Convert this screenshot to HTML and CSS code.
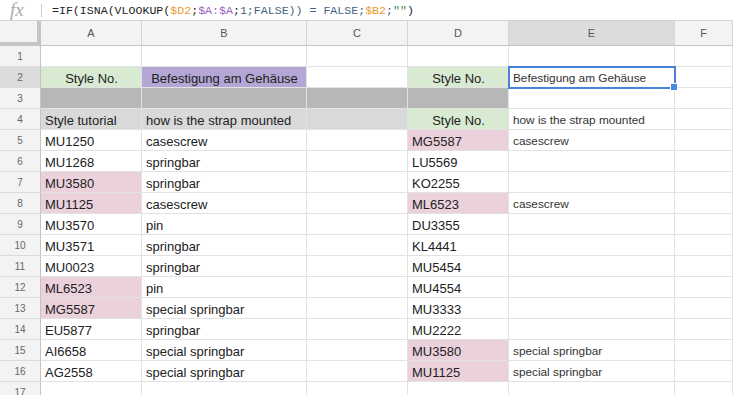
FILE: index.html
```html
<!DOCTYPE html>
<html lang="de">
<head>
  <meta charset="UTF-8" />
  <title>Sheet</title>
  <link rel="stylesheet" href="styles.css">
</head>
<body>
  <div class="formula">
    <span class="fx">fx</span>
    <span class="sep"></span>
    <span class="code">=IF(ISNA(VLOOKUP(<span class="ref1">$D2</span>;<span class="ref2">$A:$A</span>;<span class="lit">1;FALSE)) = FALSE;</span><span class="ref1">$B2</span><span class="lit">;</span><span class="str">""</span>)</span>
  </div>

  <div class="sheet">
    <div class="row head">
      <div class="corner"></div>
      <div class="col">A</div>
      <div class="col">B</div>
      <div class="col">C</div>
      <div class="col">D</div>
      <div class="col sel">E</div>
      <div class="col">F</div>
    </div>

    <div class="row">
      <div class="num">1</div>
      <div class="c"></div><div class="c"></div><div class="c"></div><div class="c"></div><div class="c"></div><div class="c"></div>
    </div>

    <div class="row">
      <div class="num sel">2</div>
      <div class="c green mid">Style No.</div>
      <div class="c purple mid">Befestigung am Gehäuse</div>
      <div class="c"></div>
      <div class="c green mid">Style No.</div>
      <div class="c small active">Befestigung am Gehäuse</div>
      <div class="c"></div>
    </div>

    <div class="row">
      <div class="num">3</div>
      <div class="c grey"></div><div class="c grey"></div><div class="c grey"></div><div class="c grey"></div>
      <div class="c"></div><div class="c"></div>
    </div>

    <div class="row">
      <div class="num">4</div>
      <div class="c light">Style tutorial</div>
      <div class="c light">how is the strap mounted</div>
      <div class="c light"></div>
      <div class="c green mid">Style No.</div>
      <div class="c small">how is the strap mounted</div>
      <div class="c"></div>
    </div>

    <div class="row">
      <div class="num">5</div>
      <div class="c">MU1250</div><div class="c">casescrew</div><div class="c"></div>
      <div class="c pink">MG5587</div><div class="c small">casescrew</div><div class="c"></div>
    </div>

    <div class="row">
      <div class="num">6</div>
      <div class="c">MU1268</div><div class="c">springbar</div><div class="c"></div>
      <div class="c">LU5569</div><div class="c small"></div><div class="c"></div>
    </div>

    <div class="row">
      <div class="num">7</div>
      <div class="c pink">MU3580</div><div class="c">springbar</div><div class="c"></div>
      <div class="c">KO2255</div><div class="c small"></div><div class="c"></div>
    </div>

    <div class="row">
      <div class="num">8</div>
      <div class="c pink">MU1125</div><div class="c">casescrew</div><div class="c"></div>
      <div class="c pink">ML6523</div><div class="c small">casescrew</div><div class="c"></div>
    </div>

    <div class="row">
      <div class="num">9</div>
      <div class="c">MU3570</div><div class="c">pin</div><div class="c"></div>
      <div class="c">DU3355</div><div class="c small"></div><div class="c"></div>
    </div>

    <div class="row">
      <div class="num">10</div>
      <div class="c">MU3571</div><div class="c">springbar</div><div class="c"></div>
      <div class="c">KL4441</div><div class="c small"></div><div class="c"></div>
    </div>

    <div class="row">
      <div class="num">11</div>
      <div class="c">MU0023</div><div class="c">springbar</div><div class="c"></div>
      <div class="c">MU5454</div><div class="c small"></div><div class="c"></div>
    </div>

    <div class="row">
      <div class="num">12</div>
      <div class="c pink">ML6523</div><div class="c">pin</div><div class="c"></div>
      <div class="c">MU4554</div><div class="c small"></div><div class="c"></div>
    </div>

    <div class="row">
      <div class="num">13</div>
      <div class="c pink">MG5587</div><div class="c">special springbar</div><div class="c"></div>
      <div class="c">MU3333</div><div class="c small"></div><div class="c"></div>
    </div>

    <div class="row">
      <div class="num">14</div>
      <div class="c">EU5877</div><div class="c">springbar</div><div class="c"></div>
      <div class="c">MU2222</div><div class="c small"></div><div class="c"></div>
    </div>

    <div class="row">
      <div class="num">15</div>
      <div class="c">AI6658</div><div class="c">special springbar</div><div class="c"></div>
      <div class="c pink">MU3580</div><div class="c small">special springbar</div><div class="c"></div>
    </div>

    <div class="row">
      <div class="num">16</div>
      <div class="c">AG2558</div><div class="c">special springbar</div><div class="c"></div>
      <div class="c pink">MU1125</div><div class="c small">special springbar</div><div class="c"></div>
    </div>

    <div class="row">
      <div class="num">17</div>
      <div class="c"></div><div class="c"></div><div class="c"></div><div class="c"></div><div class="c"></div><div class="c"></div>
    </div>
  </div>
</body>
</html>
```

FILE: styles.css
```css
* {
  box-sizing: border-box;
}

body {
  margin: 0;
  background: #fff;
  font-family: "Liberation Sans", Arial, sans-serif;
  color: #222;
  overflow: hidden;
}

/* formula bar */
.formula {
  height: 21px;
  display: flex;
  align-items: center;
  border-bottom: 1px solid #d4d4d4;
}

.fx {
  width: 41px;
  padding-left: 10px;
  font-family: "Liberation Serif", serif;
  font-style: italic;
  font-size: 19px;
  color: #aaa;
  line-height: 20px;
}

.sep {
  width: 1px;
  height: 13px;
  background: #d0d0d0;
  margin-right: 10px;
}

.code {
  font-family: "Liberation Mono", monospace;
  font-size: 11.6px;
  color: #222;
  white-space: nowrap;
}

.ref1 { color: #e69c2e; }
.ref2 { color: #9b62c0; }
.lit  { color: #46617f; }
.str  { color: #3a8c4a; }

/* grid */
.row {
  display: grid;
  grid-template-columns: 41px 101px 165px 101px 101px 166px 58px;
  height: 21px;
}

.row.head {
  height: 25px;
}

.corner {
  background: #f3f3f3;
  border-right: 4px solid #c4c4c4;
  border-bottom: 4px solid #c4c4c4;
}

.col {
  background: #f3f3f3;
  border-right: 1px solid #d4d4d4;
  border-bottom: 1px solid #c4c4c4;
  display: flex;
  align-items: center;
  justify-content: center;
  font-size: 11px;
  color: #555;
}

.num {
  background: #f3f3f3;
  border-right: 1px solid #c4c4c4;
  border-bottom: 1px solid #dcdcdc;
  display: flex;
  align-items: center;
  justify-content: center;
  font-size: 10px;
  color: #666;
}

.col.sel,
.num.sel {
  background: #dcdcdc;
}

.c {
  border-right: 1px solid #e2e2e2;
  border-bottom: 1px solid #e2e2e2;
  padding: 0 3px 0 4px;
  display: flex;
  align-items: flex-end;
  font-size: 13px;
  line-height: 16px;
  white-space: nowrap;
  overflow: hidden;
}

.c.mid {
  justify-content: center;
}

.c.small {
  font-size: 11.8px;
  color: #333;
  padding-bottom: 1px;
}

.green  { background: #d9ead3; }
.purple { background: #b4a7d6; }
.grey   { background: #b7b7b7; }
.light  { background: #d9d9d9; }
.pink   { background: #ead1dc; }

/* selected cell with fill handle */
.active {
  position: relative;
  overflow: visible;
  outline: 2px solid #4a7fdc;
  outline-offset: -1px;
  z-index: 1;
}

.active::after {
  content: "";
  position: absolute;
  right: -4px;
  bottom: -4px;
  width: 6px;
  height: 6px;
  background: #4a86e8;
  border: 1px solid #fff;
}
```
